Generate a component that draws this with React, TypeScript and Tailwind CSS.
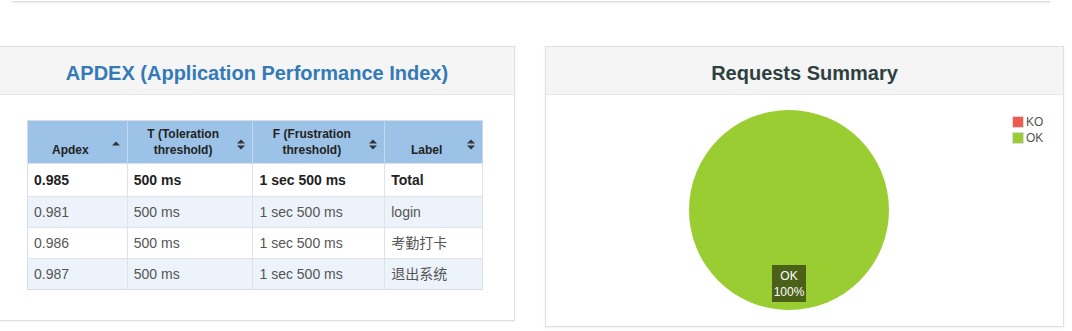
const rows = [
  { apdex: '0.985', t: '500 ms', f: '1 sec 500 ms', label: 'Total', bold: true },
  { apdex: '0.981', t: '500 ms', f: '1 sec 500 ms', label: 'login' },
  { apdex: '0.986', t: '500 ms', f: '1 sec 500 ms', label: '考勤打卡' },
  { apdex: '0.987', t: '500 ms', f: '1 sec 500 ms', label: '退出系统' },
]

const SortBoth = () => (
  <svg width="8" height="11" viewBox="0 0 8 11" className="absolute right-[7px] top-[18px]">
    <path d="M0 4.5 L4 0.5 L8 4.5 Z" fill="#333" />
    <path d="M0 6.5 L4 10.5 L8 6.5 Z" fill="#333" />
  </svg>
)

const SortUp = () => (
  <svg width="8" height="5" viewBox="0 0 8 5" className="absolute right-[7px] top-[20px]">
    <path d="M0 4.5 L4 0.5 L8 4.5 Z" fill="#333" />
  </svg>
)

const headers = [
  { text: 'Apdex', w: 'w-[100px]', icon: <SortUp /> },
  { text: 'T (Toleration threshold)', w: 'w-[126px]', icon: <SortBoth /> },
  { text: 'F (Frustration threshold)', w: 'w-[132px]', icon: <SortBoth /> },
  { text: 'Label', w: 'w-[98px]', icon: <SortBoth /> },
]

export default function App() {
  return (
    <div className="h-[331px] w-[1072px] overflow-hidden bg-white font-['Liberation_Sans',Arial,'Noto_Sans_CJK_SC',sans-serif] text-[#333]">
      <div className="ml-[12px] mr-[22px] h-[2px] border-b border-[#dcdcdc] shadow-[0_1px_2px_rgba(0,0,0,0.08)]" />

      <div className="mt-[44px] flex items-start">
        {/* APDEX panel */}
        <div className="h-[275px] w-[515px] border border-l-0 border-[#e0e0e0] bg-white shadow-[0_1px_2px_rgba(0,0,0,0.06)]">
          <div className="flex h-[48px] items-center justify-center border-b border-[#e6e6e6] bg-[#f5f5f5] pt-[4px]">
            <h2 className="text-[20px] font-bold text-[#337ab7]">APDEX (Application Performance Index)</h2>
          </div>
          <div className="pl-[27px] pt-[25px]">
            <table className="w-[456px] border-collapse border border-[#d6dde6] text-[14px]">
              <thead>
                <tr className="bg-[#9cc2e7]">
                  {headers.map((h) => (
                    <th
                      key={h.text}
                      className={`relative ${h.w} h-[43px] border-r border-[#c4d8ee] pl-[8px] pr-[22px] pb-[5px] align-bottom text-center text-[12px] leading-[16px] font-bold text-[#222]`}
                    >
                      {h.text}
                      {h.icon}
                    </th>
                  ))}
                </tr>
              </thead>
              <tbody>
                {rows.map((r, i) => (
                  <tr key={r.label} className={`${i % 2 === 1 ? 'bg-[#edf3fa]' : 'bg-white'} ${i === 0 ? 'h-[33px]' : 'h-[31px]'} border-t border-[#dde3ea]`}>
                    {[r.apdex, r.t, r.f, r.label].map((v, j) => (
                      <td key={j} className={`border-r border-[#dde3ea] px-[6px] text-left ${r.bold ? 'font-bold text-[#222]' : 'text-[#555]'}`}>
                        {v}
                      </td>
                    ))}
                  </tr>
                ))}
              </tbody>
            </table>
          </div>
        </div>

        {/* Requests Summary panel */}
        <div className="ml-[30px] h-[281px] w-[519px] border border-[#e0e0e0] bg-white shadow-[0_1px_2px_rgba(0,0,0,0.06)]">
          <div className="flex h-[48px] items-center justify-center border-b border-[#e6e6e6] bg-[#f5f5f5] pt-[4px]">
            <h2 className="text-[20px] font-bold text-[#2e4141]">Requests Summary</h2>
          </div>
          <div className="relative h-[230px]">
            <svg width="202" height="202" viewBox="0 0 202 202" className="absolute left-[142px] top-[14px]">
              <circle cx="101" cy="101" r="100" fill="#9acd32" />
            </svg>
            <div className="absolute left-[226px] top-[170px] flex h-[37px] w-[34px] flex-col items-center justify-center bg-[#4c6118] text-[12px] leading-[16px] text-white">
              <span>OK</span>
              <span>100%</span>
            </div>
            <div className="absolute left-[466px] top-[21px] flex flex-col gap-[4px] text-[12px] leading-[12px] text-[#545454]">
              <div className="flex items-center">
                <span className="mr-[2px] h-[12px] w-[12px] border border-[#ddd] bg-[#f15a4c]" />
                KO
              </div>
              <div className="flex items-center">
                <span className="mr-[2px] h-[12px] w-[12px] border border-[#ddd] bg-[#9acd32]" />
                OK
              </div>
            </div>
          </div>
        </div>
      </div>
    </div>
  )
}
